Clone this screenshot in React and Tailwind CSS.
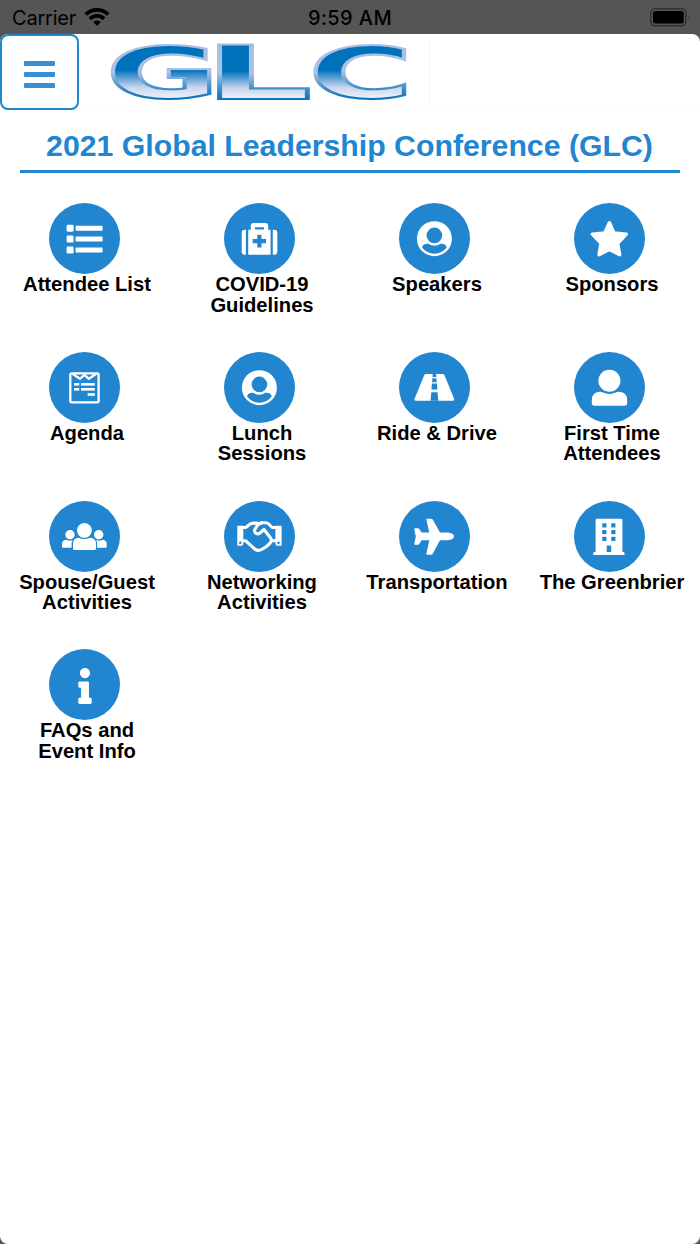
import React from 'react'
import { FaInfo } from 'react-icons/fa'

const Canvas = ({ children }) => (
  <svg viewBox="0 0 71 71" className="w-[71px] h-[71px]" fill="currentColor">
    {children}
  </svg>
)

const ListIcon = () => (
  <Canvas>
    {[21.7, 32.6, 43.6].map((y) => (
      <g key={y}>
        <rect x="17.6" y={y} width="7" height="7" rx="1.4" />
        <rect x="26.6" y={y + 1} width="27" height="5" rx="0.8" />
      </g>
    ))}
  </Canvas>
)

const MedkitIcon = () => (
  <Canvas>
    <path d="M21.9 26.7v25h-1.2a3 3 0 0 1-3-3v-19a3 3 0 0 1 3-3zM48.8 26.7h1.5a3 3 0 0 1 3 3v19a3 3 0 0 1-3 3h-1.5z" />
    <path
      fillRule="evenodd"
      d="M24.2 26.7h2.6v-4a2.7 2.7 0 0 1 2.7-2.7h12a2.7 2.7 0 0 1 2.7 2.7v4h2.4v25H24.2zM31 24.2v2.3h9v-2.3zM33.3 31.7v4.3h-4.6v4.2h4.6v4.3h4.2v-4.3H42V36h-4.5v-4.3z"
    />
  </Canvas>
)

const UserCircleIcon = () => (
  <Canvas>
    <circle cx="35.4" cy="35.7" r="17.5" />
    <g className="fill-[#2185d0]">
      <circle cx="35.4" cy="32.4" r="7.8" />
      <path d="M23 44.2q1.5-3.8 6.2-3.4 6.2 4 12.4 0 4.7-.4 6.2 3.4a15 15 0 0 1-24.8 0z" />
    </g>
  </Canvas>
)

const StarIcon = () => (
  <Canvas>
    <path
      d="M35.4 19.7L40 30l12.300 1.200-8.600 9.100 2 11.400-10.300-5.200L25 51.700l2-11.400-8.600-9.100L30.700 30z"
      stroke="currentColor"
      strokeWidth="3.4"
      strokeLinejoin="round"
    />
  </Canvas>
)

const AgendaIcon = () => (
  <Canvas>
    <g fill="none" stroke="currentColor" strokeWidth="2.3">
      <rect x="21.3" y="21.3" width="28.300" height="29" rx="1.5" />
      <path d="M23.500 21.800l7.500 5 4.400-4 4.400 4 7.500-5" />
    </g>
    <rect x="25" y="31" width="5.3" height="2.6" />
    <rect x="32" y="31" width="13.8" height="2.6" />
    <rect x="25" y="36" width="5.3" height="2.6" />
    <rect x="32" y="36" width="13.8" height="2.6" />
    <rect x="38.7" y="41.2" width="7.1" height="2.6" />
  </Canvas>
)

const RoadIcon = () => (
  <Canvas>
    <path d="M27 22h16.700q1.200 0 1.700 1.100L55 46.500q.8 2.200-1.200 2.200H16.900q-2 0-1.200-2.200l9.600-23.400q.5-1.100 1.700-1.100z" />
    <g className="fill-[#2185d0]">
      <path d="M33.700 22h3.400l.2 3h-3.800zM33.400 26.200h4l.3 4h-4.600zM32.900 31.500h5l.5 6h-6zM32.300 40.200h6.200l.8 8.600h-7.800z" />
    </g>
  </Canvas>
)

const UserIcon = () => (
  <Canvas>
    <circle cx="35.4" cy="28.8" r="11" />
    <path d="M25.500 39.700q1.800-.2 3 .6 6.900 3.600 13.800 0 1.200-.8 3-.6 7.900.8 7.900 8.300v3a2.700 2.700 0 0 1-2.700 2.700h-30a2.700 2.700 0 0 1-2.700-2.700v-3q0-7.500 7.700-8.300z" />
  </Canvas>
)

const UsersIcon = () => (
  <Canvas>
    <circle cx="35.4" cy="29.4" r="7.4" />
    <circle cx="21" cy="33.8" r="4.7" />
    <circle cx="49.7" cy="33.8" r="4.7" />
    <path d="M29.500 36.800q5.900 2.600 11.800 0 5.700.5 5.700 5.500v5.200a1.500 1.500 0 0 1-1.500 1.500h-20a1.500 1.500 0 0 1-1.500-1.500v-5.200q0-5 5.500-5.500z" />
    <path d="M17 38.700q4 1.700 6.800.4-1.200 1.600-1.200 3.600v4h-8.600a1 1 0 0 1-1-1v-3q0-3.600 4-4zM53.700 38.700q-4 1.700-6.800.4 1.200 1.600 1.200 3.600v4h8.600a1 1 0 0 0 1-1v-3q0-3.600-4-4z" />
  </Canvas>
)

const HandshakeIcon = () => (
  <Canvas>
    <path
      fillRule="evenodd"
      d="M13.300 24.800h6v17.700a2.200 2.200 0 0 1-2.200 2.200h-3.800zM16.300 40.500a1.300 1.300 0 1 0 .01 0zM57.600 24.800h-6.200v17.700a2.200 2.200 0 0 0 2.200 2.200h4zM54.500 40.500a1.300 1.300 0 1 0 .01 0z"
    />
    <g fill="none" stroke="currentColor" strokeWidth="3.1" strokeLinejoin="round">
      <path d="M19 26.500h2.700l4.200-3.200q1.500-1.200 3.500-1.200h3.800l2 .8 2.500-1.100h4q1.800 0 3 1.200l3.500 3.500H52" />
      <path d="M19 39.700h2.500l7.700 7q4.200 4.200 8.300 1.800l2.800-1.600 2.800-2 2.700-2.400 1.900-2.800H52" />
      <path d="M37.500 21.900q-3 .5-4.700 3.300l-1.600 2.600q-1.600 3 .9 4.500 2.300 1.400 4.500-.8l3.400-3 6.600 8.500q1.200 1.600.8 3" strokeLinecap="round" />
    </g>
  </Canvas>
)

const PlaneIcon = () => (
  <Canvas>
    <path d="M28.200 17.700h4q1 0 1.500.9l7.300 13h7.500q6.500.8 6.500 3.800t-6.500 3.800H41l-7.300 13.600q-.5.900-1.500.9h-4q-1 0-.8-1l2.900-13.500h-7.600l-2.600 4q-.4.500-1 .5h-3q-1 0-.8-1l1.500-7.300-1.500-7.200q-.2-1 .8-1h3q.6 0 1 .5l2.600 3.900h7.600l-2.900-12.900q-.2-1 .8-1z" />
  </Canvas>
)

const BuildingIcon = () => (
  <Canvas>
    <path d="M23 17.700h24a1.400 1.400 0 0 1 1.400 1.400V51h1.100a1 1 0 0 1 1 1v2H19.300v-2a1 1 0 0 1 1-1h1.300V19.100a1.400 1.400 0 0 1 1.400-1.400z" />
    <g className="fill-[#2185d0]">
      {[22.3, 29, 35.7].map((y) => (
        <g key={y}>
          <rect x="28.2" y={y} width="4.3" height="4.3" rx="0.7" />
          <rect x="37.2" y={y} width="4.3" height="4.3" rx="0.7" />
        </g>
      ))}
      <rect x="32.7" y="44.4" width="4.5" height="6.6" rx="0.5" />
    </g>
  </Canvas>
)

const menuItems = [
  { label: ['Attendee List'], icon: <ListIcon /> },
  { label: ['COVID-19', 'Guidelines'], icon: <MedkitIcon /> },
  { label: ['Speakers'], icon: <UserCircleIcon /> },
  { label: ['Sponsors'], icon: <StarIcon /> },
  { label: ['Agenda'], icon: <AgendaIcon /> },
  { label: ['Lunch', 'Sessions'], icon: <UserCircleIcon /> },
  { label: ['Ride & Drive'], icon: <RoadIcon /> },
  { label: ['First Time', 'Attendees'], icon: <UserIcon /> },
  { label: ['Spouse/Guest', 'Activities'], icon: <UsersIcon /> },
  { label: ['Networking', 'Activities'], icon: <HandshakeIcon /> },
  { label: ['Transportation'], icon: <PlaneIcon /> },
  { label: ['The Greenbrier'], icon: <BuildingIcon /> },
  { label: ['FAQs and', 'Event Info'], icon: <FaInfo size={36} className="mt-0.5" /> },
]

const StatusBar = () => (
  <div className="grid h-[34px] grid-cols-3 items-center pl-3 pr-[9px] font-['Inter',sans-serif] text-[20px] text-black">
    <div className="flex items-center gap-2">
      <span className="pt-0.5 tracking-[-0.2px]">Carrier</span>
      <svg width="26" height="20" viewBox="0 0 26 20" fill="none" stroke="currentColor" strokeWidth="3.8">
        <path d="M1.800 7.400a16 16 0 0 1 22.400 0M5.900 11.900a10 10 0 0 1 14.200 0" />
        <path d="M13 19l-3.800-4a5.600 5.600 0 0 1 7.600 0z" fill="currentColor" stroke="none" />
      </svg>
    </div>
    <span className="pt-0.5 pr-[3px] text-center font-medium tracking-[0.4px]">9:59 AM</span>
    <svg className="justify-self-end" width="41" height="20" viewBox="0 0 41 20">
      <rect x="0.8" y="1.8" width="35" height="17" rx="4.5" fill="none" stroke="#333" strokeWidth="1.6" />
      <rect x="3" y="4" width="30.8" height="12.6" rx="2.5" />
      <path d="M38.500 7.500q2 2.800 0 5.600z" fill="#333" />
    </svg>
  </div>
)

const Logo = () => (
  <svg className="-mt-1 shrink-0" width="322" height="90" viewBox="100 30 322 90">
    <defs>
      <linearGradient id="face" gradientUnits="userSpaceOnUse" x1="0" y1="0" x2="0" y2="-54">
        <stop offset="0" stopColor="#eef1f9" />
        <stop offset="0.2" stopColor="#c9d4ec" />
        <stop offset="0.52" stopColor="#0072bc" />
        <stop offset="1" stopColor="#0072bc" />
      </linearGradient>
      <linearGradient id="edge" gradientUnits="userSpaceOnUse" x1="0" y1="2" x2="0" y2="-54">
        <stop offset="0" stopColor="#0072bc" />
        <stop offset="0.2" stopColor="#3a8cca" />
        <stop offset="0.5" stopColor="#a9c3e4" />
        <stop offset="1" stopColor="#a9bde2" />
      </linearGradient>
    </defs>
    <g
      className="font-['DejaVu_Sans',sans-serif] font-bold"
      fill="url(#face)"
      stroke="url(#edge)"
      strokeWidth="2.2"
    >
      <text transform="translate(106 98) scale(1.920 1)" fontSize="72">G</text>
      <text transform="translate(204 99) scale(2.260 1)" fontSize="75">L</text>
      <text transform="translate(308.500 98) scale(1.980 1)" fontSize="72">C</text>
    </g>
  </svg>
)

const App = () => {
  return (
    <div className="flex h-[1244px] w-[700px] flex-col overflow-hidden bg-[#555] font-['Liberation_Sans',Arial,sans-serif]">
      <StatusBar />
      <div className="flex-1 rounded-[8px] bg-white">
        <header className="flex h-[76px] rounded-[8px] border-b border-[#fafafa]">
          <button
            aria-label="Menu"
            className="flex h-[76px] w-[79px] shrink-0 flex-col items-center justify-center gap-[6px] rounded-[8px] border-2 border-[#2185d0] pt-[4px]"
          >
            <span className="h-[5px] w-[31px] rounded-[1px] bg-[#3790d5]" />
            <span className="h-[5px] w-[31px] rounded-[1px] bg-[#3790d5]" />
            <span className="h-[5px] w-[31px] rounded-[1px] bg-[#3790d5]" />
          </button>
          <div className="mt-1 flex w-[351px] items-start border-r border-[#f7f7f7] pl-[21px]">
            <div className="-mt-1">
              <Logo />
            </div>
          </div>
        </header>
        <h1 className="mx-5 flex h-[63px] items-center justify-center border-b-[3px] border-[#2185d0] pt-3 pr-px text-[30.25px] font-bold whitespace-nowrap text-[#2185d0]">
          2021 Global Leadership Conference (GLC)
        </h1>
        <main className="mt-[30.4px] grid auto-rows-[148.7px] grid-cols-4">
          {menuItems.map(({ label, icon }) => (
            <div key={label.join(' ')} className="flex flex-col items-center">
              <div className="mr-[6px] flex h-[71px] w-[71px] items-center justify-center rounded-full bg-[#2185d0] text-white">
                {icon}
              </div>
              <p className="pr-px text-center text-[20.2px] leading-[20.4px] font-bold whitespace-nowrap text-black">
                {label.map((line) => (
                  <span key={line} className="block">{line}</span>
                ))}
              </p>
            </div>
          ))}
        </main>
      </div>
    </div>
  )
}

export default App
